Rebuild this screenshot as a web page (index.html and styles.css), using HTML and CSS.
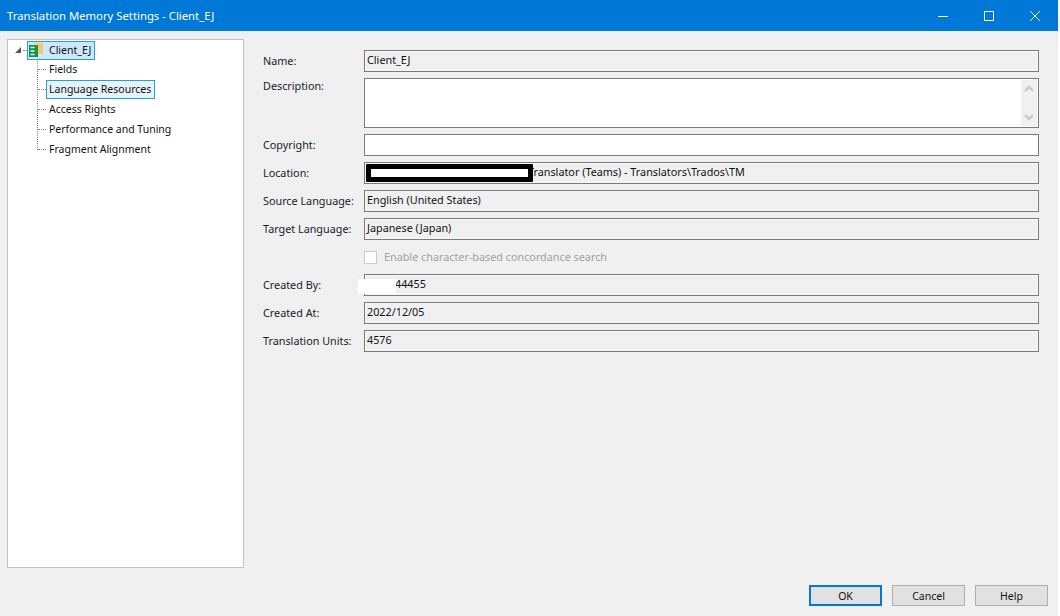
FILE: index.html
```html
<!DOCTYPE html>
<html>
<head>
    <meta charset="UTF-8">
    <title>Translation Memory Settings - Client_EJ</title>
    <link rel="stylesheet" href="styles.css">
</head>
<body>
    <div class="window">
        <div class="titlebar">
            <span class="title">Translation Memory Settings - Client_EJ</span>
            <div class="win-buttons">
                <svg width="12" height="12" viewBox="0 0 12 12"><path d="M1 6.500H11" stroke="#fff" fill="none"/></svg>
                <svg width="12" height="12" viewBox="0 0 12 12"><rect x="1.500" y="1.500" width="9" height="9" stroke="#fff" fill="none"/></svg>
                <svg width="12" height="12" viewBox="0 0 12 12"><path d="M1 1L11 11M11 1L1 11" stroke="#fff" fill="none"/></svg>
            </div>
        </div>

        <div class="main">
            <div class="tree">
                <div class="tree-root">
                    <svg class="twist" width="7" height="8" viewBox="0 0 7 8"><path d="M6 1V7H0Z" fill="#595959"/></svg>
                    <span class="root-dots"></span>
                    <div class="tree-label selected">
                        <svg class="tm-icon" width="17" height="15" viewBox="0 0 17 15">
                            <rect x="6" y="0" width="9" height="11" fill="#f3c969"/>
                            <rect x="7" y="1" width="3" height="10" fill="#f8e3a8"/>
                            <rect x="1" y="2" width="9" height="12" fill="#14934f"/>
                            <path d="M2.500 4.500H6.500M2.500 8H6.500M2.500 11.500H6.500" stroke="#eef8f2" stroke-width="1.500" fill="none"/>
                        </svg>
                        Client_EJ
                    </div>
                </div>
                <ul class="tree-children">
                    <li><span class="tree-label">Fields</span></li>
                    <li><span class="tree-label current">Language Resources</span></li>
                    <li><span class="tree-label">Access Rights</span></li>
                    <li><span class="tree-label">Performance and Tuning</span></li>
                    <li><span class="tree-label">Fragment Alignment</span></li>
                </ul>
            </div>

            <div class="form">
                <div class="row">
                    <label>Name:</label>
                    <div class="field">Client_EJ</div>
                </div>
                <div class="row">
                    <label class="top">Description:</label>
                    <div class="field white tall">
                        <div class="scrollbar">
                            <svg width="10" height="8" viewBox="0 0 10 8"><path d="M1 6L5 2L9 6" stroke="#c4c4c4" stroke-width="2" fill="none"/></svg>
                            <svg width="10" height="8" viewBox="0 0 10 8"><path d="M1 2L5 6L9 2" stroke="#c4c4c4" stroke-width="2" fill="none"/></svg>
                        </div>
                    </div>
                </div>
                <div class="row">
                    <label>Copyright:</label>
                    <div class="field white"></div>
                </div>
                <div class="row">
                    <label>Location:</label>
                    <div class="field location">
                        <span class="redact-black"></span>
                        Translator (Teams) - Translators\Trados\TM
                    </div>
                </div>
                <div class="row">
                    <label>Source Language:</label>
                    <div class="field">English (United States)</div>
                </div>
                <div class="row">
                    <label>Target Language:</label>
                    <div class="field">Japanese (Japan)</div>
                </div>
                <div class="row check-row">
                    <span class="checkbox"></span>
                    <span class="check-text">Enable character-based concordance search</span>
                </div>
                <div class="row">
                    <label>Created By:</label>
                    <div class="field created-by">
                        <span class="redact-white"></span>
                        44455
                    </div>
                </div>
                <div class="row">
                    <label>Created At:</label>
                    <div class="field">2022/12/05</div>
                </div>
                <div class="row">
                    <label>Translation Units:</label>
                    <div class="field">4576</div>
                </div>
            </div>
        </div>

        <div class="footer">
            <button class="btn default">OK</button>
            <button class="btn">Cancel</button>
            <button class="btn">Help</button>
        </div>
    </div>
</body>
</html>
```

FILE: styles.css
```css
html {
    background-color: #fff;
}

body {
    margin: 0;
    font-family: "Noto Sans", "Open Sans", sans-serif;
    font-size: 10.5px;
    color: #111;
}

.window {
    width: 1058px;
    height: 616px;
    display: flex;
    flex-direction: column;
    background-color: #f0f0f0;
    overflow: hidden;
}

.titlebar {
    height: 31px;
    flex: none;
    display: flex;
    align-items: center;
    justify-content: space-between;
    background-color: #0078d7;
    color: #fff;
    padding-left: 7px;
    font-size: 11.3px;
}

.win-buttons {
    display: flex;
    gap: 34px;
    padding-right: 17px;
}

.main {
    display: flex;
    padding: 8px 19px 0 7px;
    flex: none;
    height: 529px;
}

.tree {
    position: relative;
    box-sizing: border-box;
    width: 237px;
    height: 529px;
    background-color: #fff;
    border: 1px solid #b9c4cc;
}

.tree-root {
    display: flex;
    align-items: center;
    height: 20px;
    padding-left: 7px;
}

.twist {
    flex: none;
}

.root-dots {
    width: 4px;
    margin-left: 1px;
    border-top: 1px dotted #888;
}

.tree-label {
    display: block;
    box-sizing: border-box;
    height: 19px;
    line-height: 18px;
    padding: 0 3px;
    white-space: nowrap;
}

.selected {
    display: flex;
    align-items: center;
    gap: 4px;
    width: 68px;
    padding: 0;
    background-color: #cce8ff;
    border: 1px solid #2a9bdc;
}

.tm-icon {
    flex: none;
}

.current {
    background-color: #e5f3fb;
    border: 1px solid #2a9bdc;
    width: 109px;
    line-height: 17px;
    padding: 0 2px;
}

.tree-children {
    list-style: none;
    margin: 0;
    padding: 0;
    position: relative;
}

.tree-children::before {
    content: "";
    position: absolute;
    left: 29px;
    top: -1px;
    height: 91px;
    border-left: 1px dotted #888;
}

.tree-children li {
    position: relative;
    height: 20px;
    padding-left: 38px;
}

.tree-children li::before {
    content: "";
    position: absolute;
    left: 30px;
    top: 9px;
    width: 8px;
    border-top: 1px dotted #888;
}

.form {
    flex: 1;
    padding: 11px 0 0 19px;
    display: flex;
    flex-direction: column;
    gap: 6px;
    font-size: 10.8px;
}

.row {
    display: flex;
    align-items: center;
}

.row label {
    width: 101px;
    flex: none;
    padding-bottom: 2px;
    color: #1a1a2a;
}

.row label.top {
    align-self: flex-start;
    padding-bottom: 0;
    line-height: 16px;
}

.field {
    position: relative;
    box-sizing: border-box;
    flex: 1;
    height: 22px;
    line-height: 17px;
    padding-left: 2px;
    border: 1px solid #7a7a7a;
    box-shadow: inset 0 0 0 1px #f7f7f7;
    background-color: #f0f0f0;
    white-space: nowrap;
}

.white {
    background-color: #fff;
    box-shadow: none;
}

.tall {
    height: 50px;
}

.scrollbar {
    position: absolute;
    right: 1px;
    top: 1px;
    bottom: 1px;
    width: 16px;
    display: flex;
    flex-direction: column;
    justify-content: space-between;
    align-items: center;
    padding: 5px 0;
    box-sizing: border-box;
    background-color: #f0f0f0;
}

.location {
    padding-left: 163px;
}

.redact-black {
    position: absolute;
    left: 1px;
    top: 1px;
    width: 167px;
    height: 18px;
    box-sizing: border-box;
    background-color: #fff;
    border: 5px solid #000;
    border-radius: 1px;
}

.created-by {
    padding-left: 30px;
}

.redact-white {
    position: absolute;
    left: -7px;
    top: 4px;
    width: 38px;
    height: 15px;
    background-color: #fff;
}

.check-row {
    height: 12px;
    padding-left: 101px;
    margin: 5px 0;
}

.checkbox {
    box-sizing: border-box;
    width: 13px;
    height: 13px;
    border: 1px solid #ccc;
    background-color: #fff;
    margin-right: 7px;
}

.check-text {
    padding-bottom: 2px;
    color: #a0a0a0;
}

.footer {
    flex: 1;
    display: flex;
    justify-content: flex-end;
    gap: 10px;
    padding: 17px 10px 0 0;
}

.btn {
    box-sizing: border-box;
    width: 73px;
    height: 21px;
    padding: 0;
    background-color: #e1e1e1;
    border: 1px solid #adadad;
    font-family: inherit;
    font-size: 10.5px;
    color: #111;
}

.default {
    border: 2px solid #0078d7;
}
```
